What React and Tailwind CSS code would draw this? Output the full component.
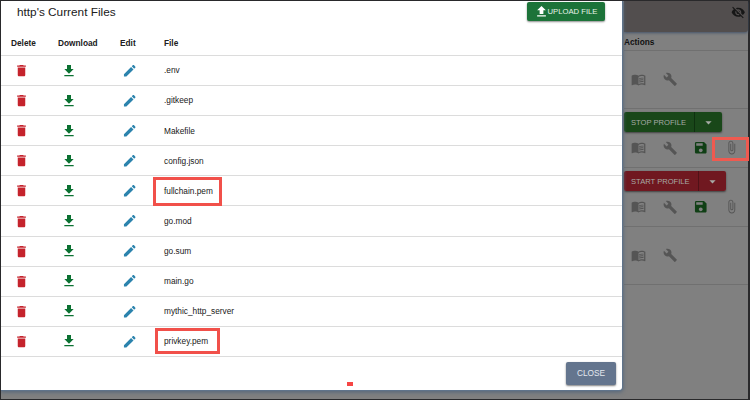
import React from 'react';
import {
  MdDelete, MdCreate, MdMenuBook, MdBuild, MdSave, MdAttachFile, MdVisibilityOff, MdArrowDropDown,
} from 'react-icons/md';

function DownloadIcon({ className }) {
  return (
    <svg viewBox="0 0 24 24" fill="currentColor" className={className}>
      <path d="M19 9h-4V3H9v6H5l7 7 7-7zM5 18v2h14v-2H5z" />
    </svg>
  );
}

function UploadIcon({ className }) {
  return (
    <svg viewBox="0 0 24 24" fill="currentColor" className={className}>
      <path d="M9 16h6v-6h4l-7-7-7 7h4zm-4 2h14v2H5z" />
    </svg>
  );
}

const files = [
  '.env', '.gitkeep', 'Makefile', 'config.json', 'fullchain.pem',
  'go.mod', 'go.sum', 'main.go', 'mythic_http_server', 'privkey.pem',
];

const columns = 'grid grid-cols-[47px_62px_44px_1fr] items-center pl-[10px] border-b border-[#dcdcdc]';

function FileRow({ name }) {
  return (
    <div className={`${columns} h-[30.1px]`}>
      <MdDelete className="ml-[3px] size-[15px] text-[#c5232c]" />
      <DownloadIcon className="ml-[2.5px] size-[16px] text-[#0b7132]" />
      <MdCreate className="ml-[2px] size-[15.5px] text-[#2b83ad]" />
      <span>{name}</span>
    </div>
  );
}

function ProfileButton({ label, body, caret }) {
  return (
    <div className="flex h-5 w-fit rounded-[2px] text-[7.6px] text-[#a7aaa6] shadow-[0_1px_2px_rgba(0,0,0,0.5)]">
      <div className={`flex items-center rounded-l-[2px] border-r pl-[7px] pt-px ${body}`}>{label}</div>
      <div className={`flex w-[27px] items-center justify-center rounded-r-[2px] ${caret}`}>
        <MdArrowDropDown className="size-[15px]" />
      </div>
    </div>
  );
}

function Tools({ full }) {
  return (
    <div className="flex items-center pl-[7px] text-[#555]">
      <MdMenuBook className="size-[15px]" />
      <MdBuild className="ml-[16.5px] size-[14.5px]" />
      {full && <MdSave className="ml-[15.5px] size-[15.5px] text-[#103f15]" />}
      {full && <MdAttachFile className="ml-[16px] size-[15px]" />}
    </div>
  );
}

export default function App() {
  return (
    <div className="relative h-[400px] w-[750px] overflow-hidden border border-[#29292b] bg-[#808080] font-['Liberation_Sans',sans-serif] text-[8.3px] leading-none text-[#202020]">
      <div className="ml-[623px] flex h-full flex-col border-r border-[#29292b]">
        <div className="flex h-[31px] shrink-0 justify-end rounded-br-[3px] bg-[#524e4e] pr-[3px] pt-[4px] text-[#171717] shadow-[0_1px_3px_#43536a]">
          <MdVisibilityOff className="size-[14.5px]" />
        </div>
        <div className="flex h-[19px] shrink-0 items-end border-b border-[#707070] pb-[4px] font-bold text-[#111]">Actions</div>
        <div className="flex h-[58px] shrink-0 items-center border-b border-[#707070]"><Tools /></div>
        <div className="flex h-[59px] shrink-0 flex-col gap-[8px] border-b border-[#707070] pt-[3px]">
          <ProfileButton label="STOP PROFILE" body="w-[71px] bg-[#194719] border-[#0e300f]" caret="bg-[#194719]" />
          <Tools full />
        </div>
        <div className="flex h-[59px] shrink-0 flex-col gap-[8px] border-b border-[#707070] pt-[3px]">
          <ProfileButton label="START PROFILE" body="w-[75px] bg-[#701820] border-[#501117]" caret="bg-[#701820]" />
          <Tools full />
        </div>
        <div className="flex h-[58px] shrink-0 items-center border-b border-[#707070]"><Tools /></div>
      </div>

      <div className="absolute left-0 top-0 flex h-[389px] w-[621px] flex-col rounded-br-[3px] bg-white shadow-[0_0_0_1px_#60748b,0_1px_4px_1px_#52657b]">
        <div className="flex h-[29px] shrink-0 items-start justify-between pl-4 pr-[17px] pt-px">
          <h1 className="pt-[4px] text-[11.8px] leading-[12px]">http's Current Files</h1>
          <button className="flex h-[19px] w-[78px] items-center rounded-[2px] bg-[#1c7339] pl-[6.5px] text-[7.7px] text-[#e8f3eb] shadow-[0_1px_2px_rgba(0,0,0,0.45)]">
            <UploadIcon className="-mr-px size-[15px] shrink-0 text-white" />
            <span className="whitespace-nowrap pt-px">UPLOAD FILE</span>
          </button>
        </div>
        <div className={`${columns} h-[26px] shrink-0 pt-[2px] font-bold`}>
          <span>Delete</span><span>Download</span><span>Edit</span><span>File</span>
        </div>
        {files.map((name) => <FileRow key={name} name={name} />)}
        <div className="flex flex-1 items-center justify-end pr-[6px]">
          <button className="flex h-[23px] w-[50px] items-center justify-center rounded-[2px] bg-[#64758e] text-[8.3px] text-[#e3e8ef] shadow-[0_1px_2px_rgba(0,0,0,0.5)]">CLOSE</button>
        </div>
      </div>

      <div className="absolute left-[152px] top-[176px] h-[29px] w-[69px] border-[3px] border-[#f1504a]" />
      <div className="absolute left-[154px] top-[327px] h-[26px] w-[65px] border-[3px] border-[#f1504a]" />
      <div className="absolute left-[711px] top-[136px] h-[24px] w-[37px] border-[3px] border-[#ef5a50]" />
      <div className="absolute left-[346px] top-[381px] h-[4px] w-[6px] bg-[#f64645]" />
    </div>
  );
}
